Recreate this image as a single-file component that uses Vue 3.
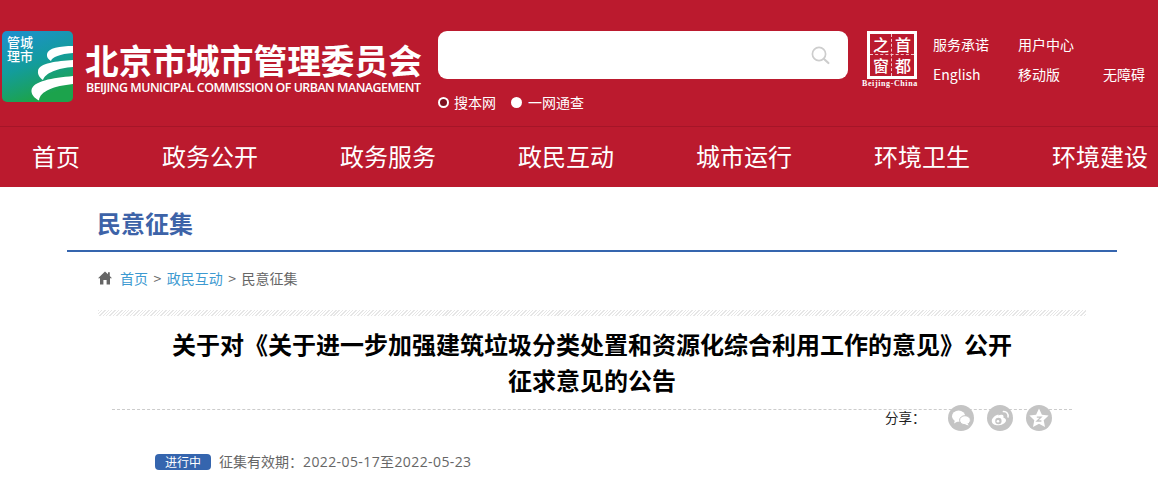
<script setup>
const navItems = ['首页', '政务公开', '政务服务', '政民互动', '城市运行', '环境卫生', '环境建设']
const topLinks = [
  ['服务承诺', '用户中心', ''],
  ['English', '移动版', '无障碍'],
]
</script>

<template>
  <div class="page">
    <header class="header">
      <div class="brand">
        <svg class="logo" viewBox="0 0 71 71" width="71" height="71">
          <defs>
            <linearGradient id="logoBg" x1="0" y1="0" x2="0.35" y2="1">
              <stop offset="0" stop-color="#1f8fd0" />
              <stop offset="0.55" stop-color="#139c9c" />
              <stop offset="1" stop-color="#1ca34c" />
            </linearGradient>
          </defs>
          <rect width="71" height="71" rx="5" fill="url(#logoBg)" />
          <path d="M71 15 C58 15 46 17 45 23 C44.5 26 46 28 49 30 C50 26 58 23 71 22 Z" fill="#fff" />
          <path d="M71 29 C55 30 37 32 36 40 C35.5 44 38 47 41 49 C43 42 56 37 71 36 Z" fill="#fff" />
          <path d="M71 45 C50 47 31 50 29.5 59 C29 63 32 67 37 69.5 C38 60 52 55 71 53 Z" fill="#fff" />
          <text x="5" y="16" class="logo-char">管城</text>
          <text x="5" y="30" class="logo-char">理市</text>
        </svg>
        <div class="brand-text">
          <div class="brand-cn">北京市城市管理委员会</div>
          <div class="brand-en">BEIJING MUNICIPAL COMMISSION OF URBAN MANAGEMENT</div>
        </div>
      </div>

      <div class="search-area">
        <div class="search-box">
          <svg width="19" height="19" viewBox="0 0 19 19" fill="none" stroke="#cdcdcd">
            <circle cx="8" cy="8" r="6.6" stroke-width="1.7" />
            <path d="M13 13 L17.4 17" stroke-width="2.2" stroke-linecap="round" />
          </svg>
        </div>
        <div class="scopes">
          <span class="scope"><i class="radio on"></i>搜本网</span>
          <span class="scope"><i class="radio"></i>一网通查</span>
        </div>
      </div>

      <div class="capital">
        <div class="capital-frame">
          <span>之</span><span>首</span><span>窗</span><span>都</span>
          <i class="rule-h"></i>
          <i class="rule-v"></i>
        </div>
        <div class="capital-en">Beijing-China</div>
      </div>

      <div class="top-links">
        <template v-for="(row, r) in topLinks" :key="r">
          <a v-for="(link, i) in row" :key="i">{{ link }}</a>
        </template>
      </div>
    </header>

    <nav class="nav">
      <a v-for="item in navItems" :key="item">{{ item }}</a>
    </nav>

    <main class="main">
      <h2 class="section-title">民意征集</h2>

      <div class="crumbs">
        <svg width="14" height="14" viewBox="0 0 14 14">
          <path d="M7 .4 L10 3.2 L10 1.2 L11.8 1.2 L11.8 4.9 L14 7.2 L12 7.2 L12 13.6 L8.6 13.6 L8.6 9 L5.4 9 L5.4 13.6 L2 13.6 L2 7.2 L0 7.2 Z" fill="#666" />
        </svg>
        <a>首页</a>
        <span>&gt;</span>
        <a>政民互动</a>
        <span>&gt;</span>
        <span>民意征集</span>
      </div>

      <div class="hatch"></div>

      <div class="article-head">
        <h1>关于对《关于进一步加强建筑垃圾分类处置和资源化综合利用工作的意见》公开征求意见的公告</h1>
      </div>

      <div class="share">
        <span class="share-label">分享：</span>
        <span class="share-icon">
          <svg width="26" height="26" viewBox="0 0 26 26" fill="#fff">
            <ellipse cx="10.6" cy="11.2" rx="6.6" ry="5.6" />
            <path d="M7 15 L6 18.4 L10 16.2 Z" />
            <ellipse cx="17" cy="15.2" rx="5.4" ry="4.5" stroke="#c4c4c4" stroke-width="1" />
            <path d="M19.4 18.4 L20.8 20.6 L17 19.4 Z" />
          </svg>
        </span>
        <span class="share-icon">
          <svg width="26" height="26" viewBox="0 0 26 26" fill="none">
            <path d="M11.4 9.6 C7.6 10.6 4.6 13.6 4.8 16.2 C5 19 8.4 20.6 12 20.2 C16 19.8 19 17.6 19 15.2 C19 13.6 17.4 13 16.4 12.8 C16.8 11.4 16.6 10 14.8 9.8 C13.6 9.6 12.4 10 11.4 10.4 Z" fill="#fff" />
            <circle cx="11.4" cy="16" r="3.2" fill="#c4c4c4" />
            <circle cx="11" cy="16.2" r="1.3" fill="#fff" />
            <path d="M16.4 6.6 C19.6 6.4 21.6 8.8 21 12" stroke="#fff" stroke-width="1.5" stroke-linecap="round" />
          </svg>
        </span>
        <span class="share-icon">
          <svg width="26" height="26" viewBox="0 0 26 26">
            <path d="M13 3.6 L15.9 9.8 L22.6 10.6 L17.7 15.2 L19 22 L13 18.7 L7 22 L8.3 15.2 L3.4 10.6 L10.1 9.8 Z" fill="#fff" />
            <path d="M10.8 12.2 H15 L11 16 H15.4" fill="none" stroke="#c4c4c4" stroke-width="1.3" />
          </svg>
        </span>
      </div>

      <div class="validity">
        <span class="badge">进行中</span>
        <span>征集有效期：<span class="dates">2022-05-17至2022-05-23</span></span>
      </div>
    </main>
  </div>
</template>

<style scoped>
.page {
  width: 1158px;
  height: 479px;
  overflow: hidden;
  background: #fff;
  font-family: "Noto Sans CJK SC", "Open Sans", sans-serif;
}

.header {
  height: 127px;
  box-sizing: border-box;
  background: #bb1a2e;
  border-bottom: 1px solid #a51528;
  display: flex;
  align-items: flex-start;
  padding: 31px 0 0 2px;
  color: #fff;
}

.brand {
  display: flex;
  width: 436px;
  flex: none;
}

.logo {
  flex: none;
}

.logo-char {
  font-size: 13px;
  font-weight: 500;
  fill: #fff;
  font-family: "Noto Sans CJK SC", sans-serif;
}

.brand-text {
  margin-left: 12px;
  padding-top: 9px;
}

.brand-cn {
  font-size: 33.7px;
  line-height: 40px;
  font-weight: 700;
  white-space: nowrap;
}

.brand-en {
  font-family: "Open Sans", sans-serif;
  font-size: 12.4px;
  line-height: 15px;
  font-weight: 600;
  letter-spacing: -0.5px;
  white-space: nowrap;
  margin-left: 1px;
}

.search-area {
  width: 410px;
  flex: none;
}

.search-box {
  height: 48px;
  background: #fff;
  border-radius: 9px;
  display: flex;
  align-items: center;
  justify-content: flex-end;
  padding-right: 18px;
}

.scopes {
  display: flex;
  gap: 15px;
  margin-top: 14px;
  font-size: 14px;
  line-height: 18px;
}

.scope {
  display: flex;
  align-items: center;
}

.radio {
  width: 11px;
  height: 11px;
  box-sizing: border-box;
  border-radius: 50%;
  background: #fff;
  margin-right: 6px;
}

.radio.on {
  background: #7d1020;
  border: 2px solid #fff;
  margin-right: 5px;
}

.capital {
  width: 66px;
  margin-left: 16px;
  flex: none;
}

.capital-frame {
  position: relative;
  width: 50px;
  height: 48px;
  margin-left: 3px;
  box-sizing: border-box;
  border: 3px solid #fff;
  display: grid;
  grid-template-columns: 1fr 1fr;
  grid-template-rows: 1fr 1fr;
  font-size: 16px;
  line-height: 21px;
  font-weight: 500;
  text-align: center;
  font-family: "Noto Sans CJK SC", sans-serif;
}

.rule-h {
  position: absolute;
  left: 0;
  right: 0;
  top: 20px;
  border-top: 1px dashed #f3c4ca;
}

.rule-v {
  position: absolute;
  top: 0;
  bottom: 0;
  left: 21px;
  border-left: 1px dashed #f3c4ca;
}

.capital-en {
  font-family: "Liberation Serif", serif;
  font-size: 8px;
  line-height: 10px;
  font-weight: 700;
  letter-spacing: 0.6px;
  margin: 0 0 0 -2px;
  white-space: nowrap;
}

.top-links {
  flex: none;
  display: grid;
  grid-template-columns: 85px 85px 60px;
  grid-auto-rows: 30px;
  margin: -2px 0 0 3px;
  font-size: 14px;
  line-height: 30px;
  white-space: nowrap;
}

.nav {
  height: 60px;
  box-sizing: border-box;
  padding: 0 0 4px 32px;
  background: #bb1a2e;
  display: flex;
  align-items: center;
  gap: 82px;
  color: #fff;
  font-size: 24px;
  white-space: nowrap;
}

.section-title {
  margin: 0 41px 0 67px;
  padding-left: 30px;
  height: 63px;
  line-height: 71px;
  border-bottom: 2px solid #3565ae;
  font-size: 24px;
  font-weight: 700;
  color: #3d63a8;
  width: 1020px;
}

.crumbs {
  display: flex;
  align-items: center;
  gap: 5.5px;
  margin: 15px 0 0 98px;
  height: 22px;
  font-size: 14px;
  color: #666;
}

.crumbs svg {
  margin-right: 2.5px;
}

.crumbs a {
  color: #3d9ad1;
}

.hatch {
  margin: 21px 0 0 98px;
  width: 988px;
  height: 6px;
  background: repeating-linear-gradient(135deg, #e6e6e6 0 1px, #fff 1px 2.4px);
}

.article-head {
  margin: 9px 86px 0 112px;
  height: 84px;
  border-bottom: 1px dashed #ccc;
  width: 960px;
}

h1 {
  margin: 0 auto;
  width: 842px;
  font-size: 24px;
  line-height: 36px;
  font-weight: 700;
  color: #000;
  text-align: center;
  padding-top: 1px;
}

.share {
  position: relative;
  display: flex;
  align-items: center;
  height: 26px;
  margin: -5px 0 0 885px;
  gap: 13px;
}

.share-label {
  font-size: 13.5px;
  line-height: 20px;
  padding-bottom: 3px;
  color: #222;
  width: 50px;
}

.share-icon {
  width: 26px;
  height: 26px;
  border-radius: 50%;
  background: #c4c4c4;
  display: block;
}

.share-icon svg {
  display: block;
}

.validity {
  display: flex;
  align-items: center;
  gap: 8px;
  margin: 20px 0 0 155px;
  font-size: 14px;
  line-height: 20px;
  color: #666;
}

.dates {
  font-family: "Open Sans", "Noto Sans CJK SC", sans-serif;
  letter-spacing: 0.4px;
}

.badge {
  width: 56px;
  height: 16px;
  line-height: 16px;
  border-radius: 4px;
  background: #3565ae;
  color: #fff;
  font-size: 12px;
  text-align: center;
}
</style>
